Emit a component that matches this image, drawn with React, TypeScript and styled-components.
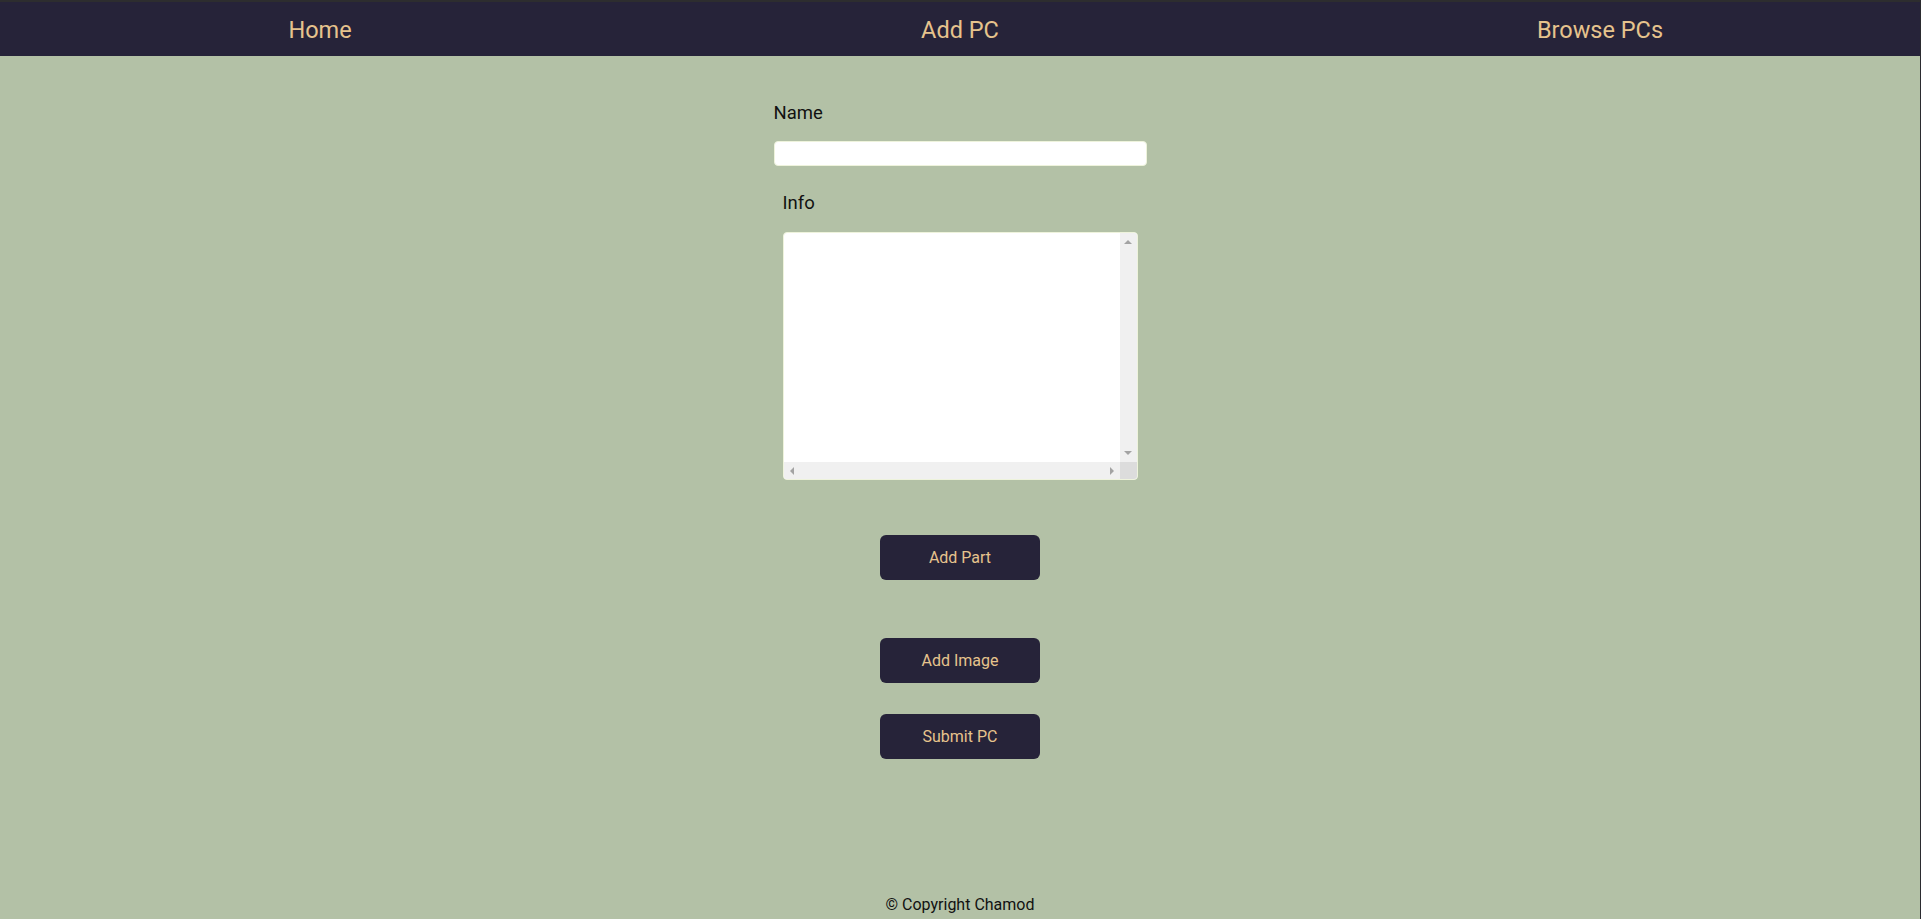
import React from "react";
import styled, { createGlobalStyle } from "styled-components";

const GlobalStyle = createGlobalStyle`
  html, body {
    margin: 0;
    padding: 0;
    background: #b3c1a6;
  }
  body {
    font-family: Roboto, "Liberation Sans", Arial, sans-serif;
    color: #111111;
  }
  * { box-sizing: border-box; }
`;

const Frame = styled.div`
  min-height: 100vh;
  border-top: 2px solid #2d2d2f;
  border-right: 1px solid #2b2b30;
  display: flex;
  flex-direction: column;
`;

const NavBar = styled.nav`
  height: 54px;
  padding-top: 2px;
  background: #262339;
  display: grid;
  grid-template-columns: repeat(3, 1fr);
  align-items: center;
`;

const NavLink = styled.a`
  justify-self: center;
  font-size: 23.5px;
  line-height: 28px;
  color: #e6c38d;
  text-decoration: none;
  cursor: pointer;
`;

const Main = styled.main`
  display: flex;
  flex-direction: column;
  align-items: center;
  padding-top: 47px;
`;

const Form = styled.form`
  width: 373px;
  display: flex;
  flex-direction: column;
`;

const Field = styled.div<{ $inset?: number; $top?: number }>`
  display: flex;
  flex-direction: column;
  padding: 0 ${(p) => p.$inset ?? 0}px;
  margin-top: ${(p) => p.$top ?? 0}px;
`;

const Label = styled.label<{ $gap: number }>`
  font-size: 18.5px;
  line-height: 21px;
  color: #111111;
  margin-bottom: ${(p) => p.$gap}px;
`;

const TextInput = styled.input`
  height: 25px;
  width: 100%;
  border: 1px solid #eef3dc;
  border-radius: 4px;
  background: #ffffff;
  outline: none;
  font-family: inherit;
  font-size: 14px;
  padding: 0 6px;
`;

const ScrollBox = styled.div`
  height: 248px;
  border: 1px solid #eef3dc;
  border-radius: 4px;
  background: #ffffff;
  overflow: hidden;
  display: grid;
  grid-template-columns: 1fr 17px;
  grid-template-rows: 1fr 17px;
`;

const InfoArea = styled.textarea`
  grid-column: 1;
  grid-row: 1;
  width: 100%;
  height: 100%;
  border: none;
  background: transparent;
  outline: none;
  resize: none;
  overflow: hidden;
  font-family: inherit;
  font-size: 14px;
  padding: 4px;
`;

const VBar = styled.div`
  grid-column: 2;
  grid-row: 1;
  background: #f0f0f0;
  display: flex;
  flex-direction: column;
  justify-content: space-between;
  align-items: center;
  padding: 7px 0 7px;
`;

const HBar = styled.div`
  grid-column: 1;
  grid-row: 2;
  background: #f0f0f0;
  display: flex;
  justify-content: space-between;
  align-items: center;
  padding: 0 6px;
`;

const Corner = styled.div`
  grid-column: 2;
  grid-row: 2;
  background: #dcdcdc;
`;

const Arrow = styled.span<{ $dir: "up" | "down" | "left" | "right" }>`
  width: 0;
  height: 0;
  border-style: solid;
  border-color: transparent;
  ${(p) =>
    p.$dir === "up"
      ? "border-width: 0 4px 4px 4px; border-bottom-color: #a3a3a3;"
      : p.$dir === "down"
      ? "border-width: 4px 4px 0 4px; border-top-color: #a3a3a3;"
      : p.$dir === "left"
      ? "border-width: 4px 4px 4px 0; border-right-color: #a3a3a3;"
      : "border-width: 4px 0 4px 4px; border-left-color: #a3a3a3;"}
`;

const Actions = styled.div`
  display: flex;
  flex-direction: column;
  align-items: center;
`;

const ActionButton = styled.button<{ $top: number }>`
  margin-top: ${(p) => p.$top}px;
  width: 160px;
  height: 45px;
  border: none;
  border-radius: 6px;
  background: #262339;
  color: #e6c38d;
  font-family: Roboto, "Liberation Sans", Arial, sans-serif;
  font-size: 16px;
  cursor: pointer;
`;

const Footer = styled.footer`
  margin-top: 136px;
  text-align: center;
  font-size: 16px;
  line-height: 19px;
  color: #111111;
  padding-bottom: 5px;
`;

export default function App() {
  return (
    <>
      <GlobalStyle />
      <Frame>
        <NavBar>
          <NavLink>Home</NavLink>
          <NavLink>Add PC</NavLink>
          <NavLink>Browse PCs</NavLink>
        </NavBar>
        <Main>
          <Form onSubmit={(e) => e.preventDefault()}>
            <Field>
              <Label $gap={17} htmlFor="pc-name">Name</Label>
              <TextInput id="pc-name" type="text" />
            </Field>
            <Field $inset={9} $top={27}>
              <Label $gap={18} htmlFor="pc-info">Info</Label>
              <ScrollBox>
                <InfoArea id="pc-info" />
                <VBar>
                  <Arrow $dir="up" />
                  <Arrow $dir="down" />
                </VBar>
                <HBar>
                  <Arrow $dir="left" />
                  <Arrow $dir="right" />
                </HBar>
                <Corner />
              </ScrollBox>
            </Field>
          </Form>
          <Actions>
            <ActionButton type="button" $top={55}>Add Part</ActionButton>
            <ActionButton type="button" $top={58}>Add Image</ActionButton>
            <ActionButton type="button" $top={31}>Submit PC</ActionButton>
          </Actions>
          <Footer>© Copyright Chamod</Footer>
        </Main>
      </Frame>
    </>
  );
}
